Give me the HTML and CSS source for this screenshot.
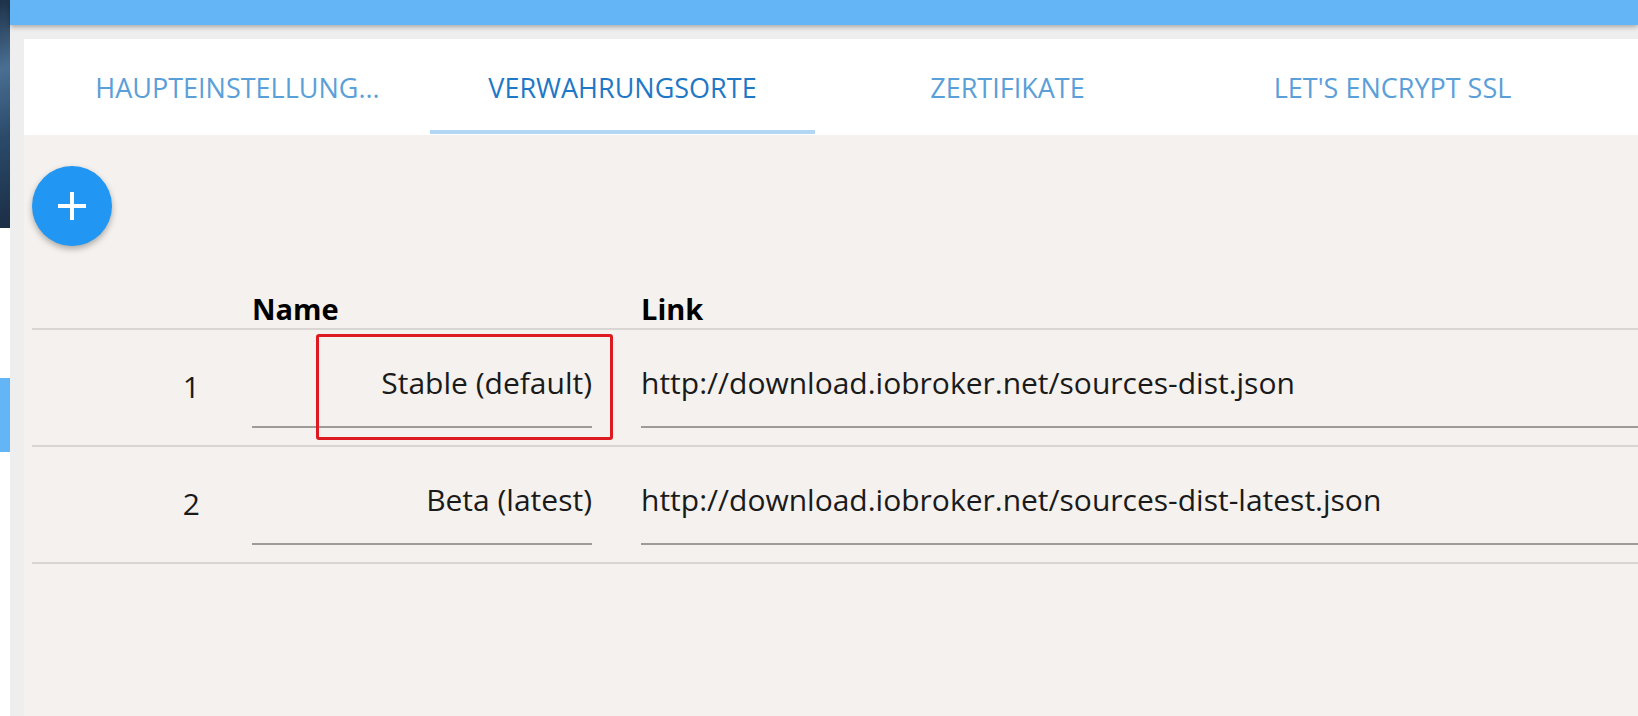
FILE: index.html
```html
<!DOCTYPE html>
<html lang="de">
<head>
    <meta charset="UTF-8">
    <title>Einstellungen</title>
    <link rel="stylesheet" href="styles.css">
</head>
<body>
<div class="app">
    <div class="rail">
        <div class="rail-pic"></div>
        <div class="rail-mark"></div>
    </div>
    <div class="main">
        <div class="topbar"></div>
        <div class="page">
            <div class="panel">
                <div class="tabs">
                    <div class="tab">HAUPTEINSTELLUNG...</div>
                    <div class="tab active">VERWAHRUNGSORTE</div>
                    <div class="tab">ZERTIFIKATE</div>
                    <div class="tab">LET'S ENCRYPT SSL</div>
                </div>
                <div class="content">
                    <button class="fab">
                        <svg width="32" height="32" viewBox="0 0 32 32">
                            <path d="M16 2v28M2 16h28" stroke="#fff" stroke-width="4" fill="none"/>
                        </svg>
                    </button>
                    <div class="table">
                        <div class="row head">
                            <div></div>
                            <div class="c-name">Name</div>
                            <div class="c-link">Link</div>
                        </div>
                        <div class="row">
                            <div class="c-num">1</div>
                            <div class="field right">Stable (default)</div>
                            <div class="field link">http://download.iobroker.net/sources-dist.json</div>
                            <div class="mark"></div>
                        </div>
                        <div class="row">
                            <div class="c-num">2</div>
                            <div class="field right">Beta (latest)</div>
                            <div class="field link">http://download.iobroker.net/sources-dist-latest.json</div>
                        </div>
                    </div>
                </div>
            </div>
        </div>
    </div>
</div>
</body>
</html>
```

FILE: styles.css
```css
html,body{
    margin: 0;
    height: 100%;
    overflow: hidden;
    background: #fff;
    font-family: "Open Sans", "Noto Sans", sans-serif;
}
.app{
    display: flex;
    height: 716px;
}
/*左边露出来的一点侧栏*/
.rail{
    width: 10px;
    display: flex;
    flex-direction: column;
    background: #fff;
}
.rail-pic{
    height: 228px;
    background: linear-gradient(160deg,#1d3148 0%,#4a6f92 30%,#2b4a6a 60%,#1b2e44 100%);
}
.rail-mark{
    height: 74px;
    margin-top: 150px;
    background: #64b5f6;
}
.main{
    flex: 1;
    display: flex;
    flex-direction: column;
    background: #eeeeee;
}
.topbar{
    height: 25px;
    background: #64b5f6;
    box-shadow: 0 2px 5px rgba(0,0,0,0.3);
    position: relative;
    z-index: 1;
}
.page{
    flex: 1;
    padding: 14px 0 0 14px;
    display: flex;
}
.panel{
    flex: 1;
    background: #f4f1ee;
}
/*标签栏*/
.tabs{
    display: flex;
    height: 96px;
    padding-left: 21px;
    background: #fff;
}
.tab{
    position: relative;
    width: 385px;
    display: flex;
    align-items: center;
    justify-content: center;
    font-size: 27px;
    color: #5b9fd9;
}
.tab.active{
    color: #1f78c6;
}
.tab.active:after{
    content: '';
    position: absolute;
    left: 0;
    right: 0;
    bottom: 1px;
    height: 4px;
    background: #b3d6f2;
}
.content{
    padding: 31px 0 0 8px;
}
.fab{
    display: flex;
    align-items: center;
    justify-content: center;
    width: 80px;
    height: 80px;
    padding: 0;
    border: none;
    border-radius: 50%;
    background: #2196f3;
    box-shadow: 0 3px 6px rgba(0,0,0,0.3);
}
/*表格*/
.table{
    margin-top: 44px;
    font-size: 30px;
    color: #1a1a1a;
}
.row{
    position: relative;
    display: grid;
    grid-template-columns: 220px 340px 1fr;
    align-items: center;
    padding: 30px 0 17px;
    border-bottom: 2px solid #d8d5d2;
}
.row.head{
    height: 38px;
    padding: 0;
    line-height: 38px;
    font-size: 29px;
    font-weight: bold;
    color: #000;
}
.c-link{
    padding-left: 49px;
}
.c-num{
    text-align: right;
    padding: 0 52px 16px 0;
}
.field{
    line-height: 40px;
    padding: 3px 0 23px;
    border-bottom: 2px solid #9e9b98;
    white-space: nowrap;
}
.field.right{
    text-align: right;
}
.field.link{
    margin-left: 49px;
}
/*红框标注*/
.mark{
    position: absolute;
    top: 4px;
    left: 284px;
    width: 291px;
    height: 100px;
    border: 3px solid #dc1a1f;
    border-radius: 3px;
}
```
